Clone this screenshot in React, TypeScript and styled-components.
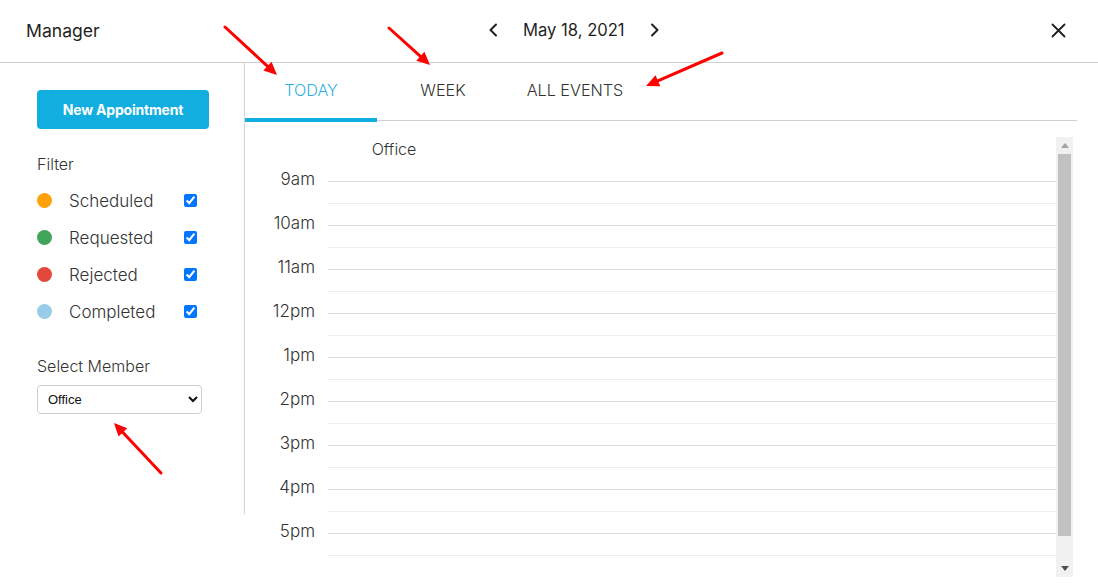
import React from "react";
import styled, { createGlobalStyle } from "styled-components";

const GlobalStyle = createGlobalStyle`
  * { box-sizing: border-box; }
  html, body { margin: 0; padding: 0; background: #fff; }
  body { font-family: Inter, "Noto Sans", sans-serif; color: #222; }
`;

const Page = styled.div`
  position: relative;
  width: 1098px;
  height: 588px;
  overflow: hidden;
  background: #fff;
`;

const Header = styled.header`
  height: 63px;
  border-bottom: 1px solid #cfcfcf;
  display: grid;
  grid-template-columns: 462px auto 1fr;
  align-items: center;
  padding: 0 32px 2px 26px;
`;

const Title = styled.h1`
  margin: 0;
  font-size: 17.6px;
  font-weight: 400;
  color: #1f1f1f;
`;

const DateNav = styled.div`
  display: flex;
  align-items: center;
  gap: 25px;
  font-size: 16.6px;
  color: #1f1f1f;
`;

const IconButton = styled.button`
  border: 0;
  background: none;
  padding: 0;
  display: flex;
  align-items: center;
  justify-content: center;
  color: #1f1f1f;
  cursor: pointer;
`;

const CloseButton = styled(IconButton)`
  justify-self: end;
`;

const Body = styled.div`
  display: flex;
  height: 525px;
`;

const Sidebar = styled.aside`
  width: 245px;
  height: 451px;
  flex: none;
  border-right: 1px solid #d4d4d4;
  padding: 27px 0 0 37px;
  display: flex;
  flex-direction: column;
`;

const PrimaryButton = styled.button`
  width: 172px;
  height: 39px;
  border: 0;
  border-radius: 4px;
  background: #12aee0;
  color: #fff;
  font-family: inherit;
  font-size: 14px;
  font-weight: 700;
  letter-spacing: -0.2px;
`;

const SectionLabel = styled.div<{ $top: number }>`
  margin-top: ${(p) => p.$top}px;
  font-size: 16px;
  line-height: 20px;
  font-weight: 300;
  color: #333;
`;

const FilterList = styled.ul`
  list-style: none;
  margin: 8px 0 0;
  padding: 0;
`;

const FilterRow = styled.li`
  height: 37px;
  display: flex;
  align-items: center;
`;

const Dot = styled.span<{ $color: string }>`
  width: 15px;
  height: 15px;
  border-radius: 50%;
  background: ${(p) => p.$color};
  flex: none;
`;

const FilterName = styled.span`
  width: 115px;
  margin-left: 17px;
  font-size: 17px;
  font-weight: 300;
  color: #333;
`;

const Check = styled.input`
  width: 13px;
  height: 13px;
  margin: 0;
  accent-color: #0075ff;
`;

const Select = styled.select`
  margin-top: 9px;
  width: 165px;
  height: 29px;
  border: 1px solid #cfcfcf;
  border-radius: 4px;
  background: #fff;
  font-family: "Liberation Sans", Arial, sans-serif;
  font-size: 13px;
  color: #111;
  padding: 0 6px;
`;

const Main = styled.main`
  flex: 1;
  min-width: 0;
  padding-right: 21px;
  display: flex;
  flex-direction: column;
`;

const TabList = styled.nav`
  height: 58px;
  border-bottom: 1px solid #cfcfcf;
  display: flex;
  align-items: flex-start;
`;

const Tab = styled.button<{ $active?: boolean }>`
  width: 132px;
  height: 59px;
  border: 0;
  border-bottom: 4px solid ${(p) => (p.$active ? "#12aee0" : "transparent")};
  background: none;
  padding: 0 0 2px;
  font-family: inherit;
  font-size: 16.2px;
  font-weight: 300;
  text-transform: uppercase;
  color: ${(p) => (p.$active ? "#2eafe0" : "#333")};
  cursor: pointer;
`;

const Calendar = styled.section`
  margin: 16px 4px 0 0;
  height: 440px;
  display: flex;
`;

const Grid = styled.div`
  flex: 1;
  min-width: 0;
  overflow: hidden;
  display: flex;
  flex-direction: column;
`;

const ColumnHeader = styled.div`
  height: 33px;
  flex: none;
  display: flex;
  padding-left: 83px;
`;

const ColumnTitle = styled.div`
  width: 132px;
  text-align: center;
  font-size: 16px;
  font-weight: 300;
  color: #333;
  line-height: 25px;
`;

const SlotRow = styled.div`
  height: 22px;
  flex: none;
  display: flex;
  align-items: center;
`;

const TimeLabel = styled.div`
  width: 83px;
  padding-right: 13px;
  text-align: right;
  font-size: 17px;
  font-weight: 300;
  color: #333;
  line-height: 20px;
  margin-top: -4px;
`;

const SlotLine = styled.div<{ $hour?: boolean }>`
  flex: 1;
  height: 1px;
  background: ${(p) => (p.$hour ? "#dcdcdc" : "#ececec")};
`;

const ScrollTrack = styled.div`
  width: 17px;
  flex: none;
  background: #f1f1f1;
  display: flex;
  flex-direction: column;
  align-items: center;
`;

const ScrollArrow = styled.div<{ $end?: boolean }>`
  height: 17px;
  flex: none;
  margin-top: ${(p) => (p.$end ? "auto" : "0")};
  display: flex;
  align-items: center;
  justify-content: center;
`;

const ScrollThumb = styled.div`
  width: 13px;
  height: 382px;
  background: #c1c1c1;
`;

const Overlay = styled.svg`
  position: absolute;
  inset: 0;
  pointer-events: none;
`;

const filters = [
  { name: "Scheduled", color: "#ffa10a" },
  { name: "Requested", color: "#41a45b" },
  { name: "Rejected", color: "#e2493b" },
  { name: "Completed", color: "#97cde8" },
];

const hours = ["9am", "10am", "11am", "12pm", "1pm", "2pm", "3pm", "4pm", "5pm"];

const arrows: [number, number, number, number][] = [
  [225, 27, 277, 75],
  [389, 28, 430, 65],
  [722, 53, 646, 86],
  [161, 473, 114, 423],
];

function Arrow({ x1, y1, x2, y2 }: { x1: number; y1: number; x2: number; y2: number }) {
  const dx = x2 - x1;
  const dy = y2 - y1;
  const len = Math.hypot(dx, dy);
  const ux = dx / len;
  const uy = dy / len;
  const head = 13;
  const half = 6;
  const bx = x2 - ux * head;
  const by = y2 - uy * head;
  const px = -uy;
  const py = ux;
  return (
    <g>
      <line x1={x1} y1={y1} x2={bx + ux * 2} y2={by + uy * 2} stroke="#ff0000" strokeWidth={3} strokeLinecap="round" />
      <polygon
        points={`${x2},${y2} ${bx + px * half},${by + py * half} ${bx - px * half},${by - py * half}`}
        fill="#ff0000"
      />
    </g>
  );
}

export default function App() {
  return (
    <>
      <GlobalStyle />
      <Page>
        <Header>
          <Title>Manager</Title>
          <DateNav>
            <IconButton aria-label="Previous day">
              <svg width="10" height="14" viewBox="0 0 10 14" fill="none" stroke="currentColor" strokeWidth="2" strokeLinecap="round" strokeLinejoin="round">
                <polyline points="8,1.5 2.5,7 8,12.5" />
              </svg>
            </IconButton>
            <span>May 18, 2021</span>
            <IconButton aria-label="Next day">
              <svg width="10" height="14" viewBox="0 0 10 14" fill="none" stroke="currentColor" strokeWidth="2" strokeLinecap="round" strokeLinejoin="round">
                <polyline points="2,1.5 7.5,7 2,12.5" />
              </svg>
            </IconButton>
          </DateNav>
          <CloseButton aria-label="Close">
            <svg width="15" height="15" viewBox="0 0 15 15" fill="none" stroke="currentColor" strokeWidth="1.8" strokeLinecap="round">
              <line x1="1.5" y1="1.5" x2="13.5" y2="13.5" />
              <line x1="13.5" y1="1.5" x2="1.5" y2="13.5" />
            </svg>
          </CloseButton>
        </Header>
        <Body>
          <Sidebar>
            <PrimaryButton>New Appointment</PrimaryButton>
            <SectionLabel $top={25}>Filter</SectionLabel>
            <FilterList>
              {filters.map((f) => (
                <FilterRow key={f.name}>
                  <Dot $color={f.color} />
                  <FilterName>{f.name}</FilterName>
                  <Check type="checkbox" defaultChecked />
                </FilterRow>
              ))}
            </FilterList>
            <SectionLabel $top={26}>Select Member</SectionLabel>
            <Select defaultValue="Office">
              <option>Office</option>
            </Select>
          </Sidebar>
          <Main>
            <TabList>
              <Tab $active>Today</Tab>
              <Tab>Week</Tab>
              <Tab>All Events</Tab>
            </TabList>
            <Calendar>
              <Grid>
                <ColumnHeader>
                  <ColumnTitle>Office</ColumnTitle>
                </ColumnHeader>
                {hours.map((h) => (
                  <React.Fragment key={h}>
                    <SlotRow>
                      <TimeLabel>{h}</TimeLabel>
                      <SlotLine $hour />
                    </SlotRow>
                    <SlotRow>
                      <TimeLabel />
                      <SlotLine />
                    </SlotRow>
                  </React.Fragment>
                ))}
              </Grid>
              <ScrollTrack>
                <ScrollArrow>
                  <svg width="8" height="5" viewBox="0 0 8 5"><polygon points="4,0 8,5 0,5" fill="#a3a3a3" /></svg>
                </ScrollArrow>
                <ScrollThumb />
                <ScrollArrow $end>
                  <svg width="8" height="5" viewBox="0 0 8 5"><polygon points="0,0 8,0 4,5" fill="#505050" /></svg>
                </ScrollArrow>
              </ScrollTrack>
            </Calendar>
          </Main>
        </Body>
        <Overlay width="1098" height="588" viewBox="0 0 1098 588">
          {arrows.map(([x1, y1, x2, y2], i) => (
            <Arrow key={i} x1={x1} y1={y1} x2={x2} y2={y2} />
          ))}
        </Overlay>
      </Page>
    </>
  );
}
